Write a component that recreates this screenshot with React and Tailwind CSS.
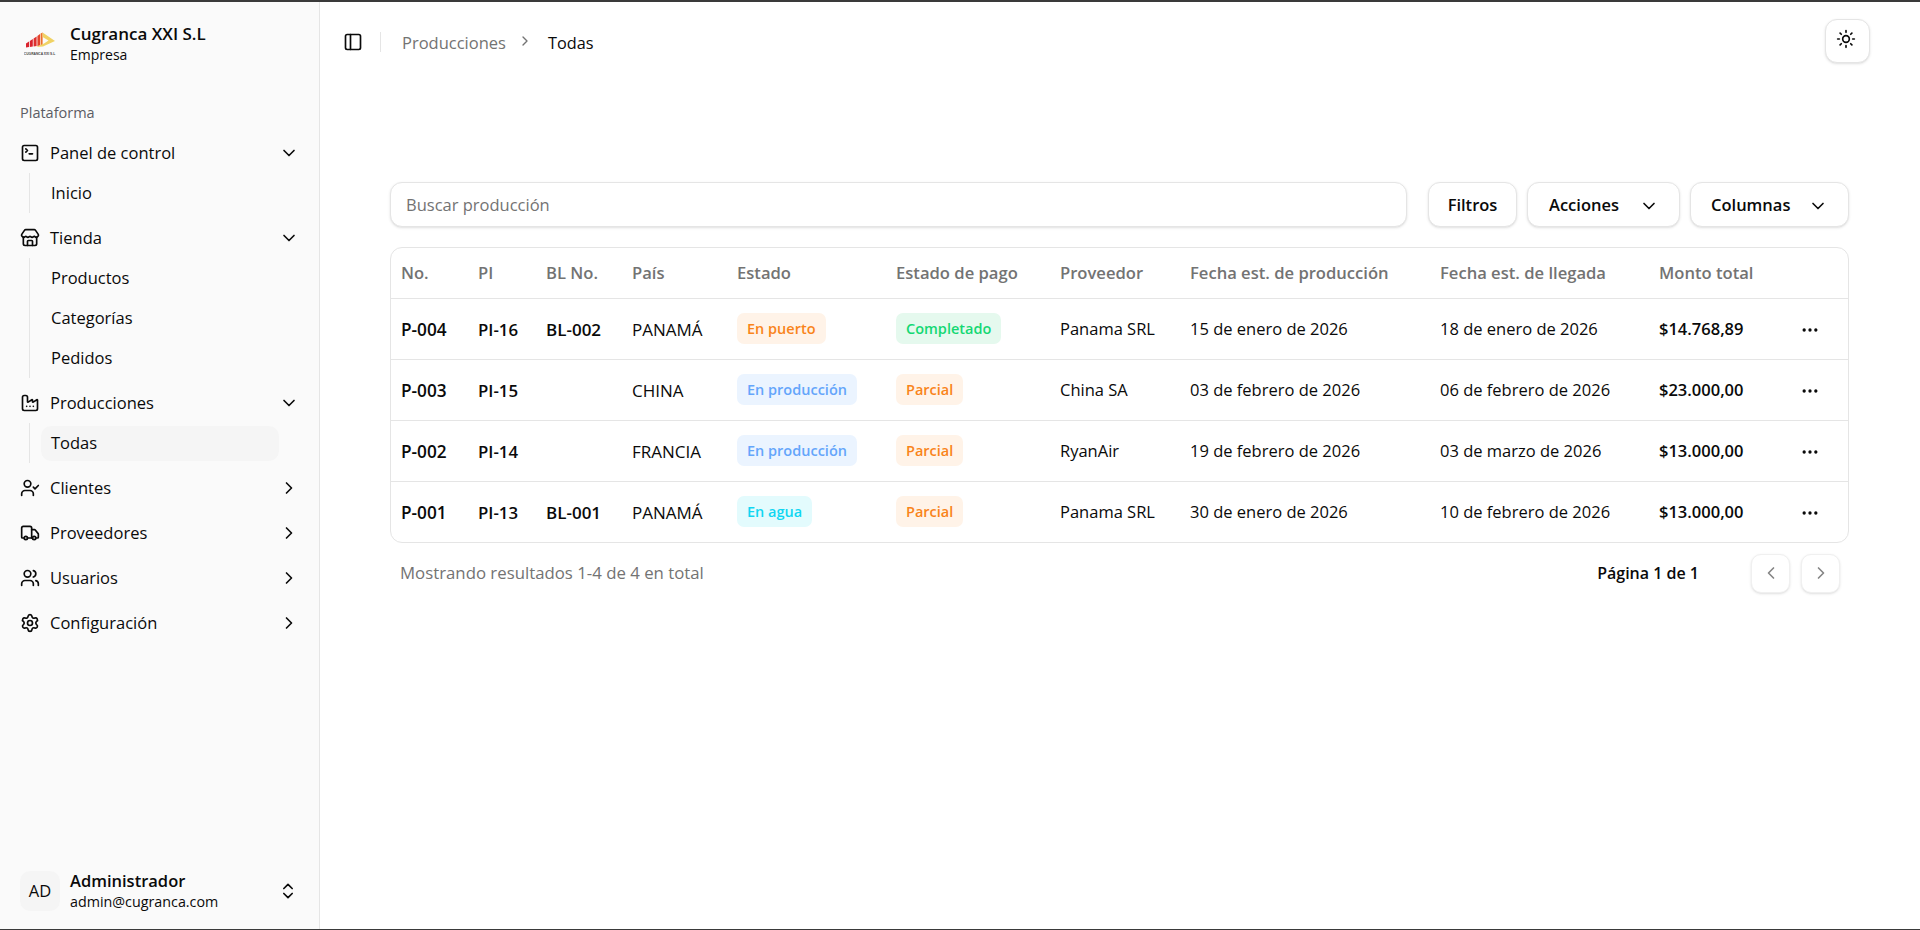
import {
    SquareTerminal,
    Store,
    Factory,
    UserCheck,
    Truck,
    Users,
    Settings,
    ChevronDown,
    ChevronRight,
    ChevronLeft,
    ChevronsUpDown,
    PanelLeft,
    Sun,
    Ellipsis,
} from "lucide-react";

const navItems = [
    { label: "Panel de control", icon: SquareTerminal, open: true, children: ["Inicio"] },
    { label: "Tienda", icon: Store, open: true, children: ["Productos", "Categorías", "Pedidos"] },
    { label: "Producciones", icon: Factory, open: true, children: ["Todas"] },
    { label: "Clientes", icon: UserCheck },
    { label: "Proveedores", icon: Truck },
    { label: "Usuarios", icon: Users },
    { label: "Configuración", icon: Settings },
];

const badgeStyles = {
    puerto: "bg-[#fff3e8] text-[#f9841a]",
    produccion: "bg-[#ebf4ff] text-[#64a5fb]",
    agua: "bg-[#e3fbfd] text-[#0fd6f2]",
    completado: "bg-[#e5f9ee] text-[#14d873]",
    parcial: "bg-[#fff3e8] text-[#f9841a]",
};

const rows = [
    {
        no: "P-004", pi: "PI-16", bl: "BL-002", pais: "PANAMÁ",
        estado: ["En puerto", "puerto"], pago: ["Completado", "completado"],
        proveedor: "Panama SRL", prod: "15 de enero de 2026", llegada: "18 de enero de 2026", monto: "$14.768,89",
    },
    {
        no: "P-003", pi: "PI-15", bl: "", pais: "CHINA",
        estado: ["En producción", "produccion"], pago: ["Parcial", "parcial"],
        proveedor: "China SA", prod: "03 de febrero de 2026", llegada: "06 de febrero de 2026", monto: "$23.000,00",
    },
    {
        no: "P-002", pi: "PI-14", bl: "", pais: "FRANCIA",
        estado: ["En producción", "produccion"], pago: ["Parcial", "parcial"],
        proveedor: "RyanAir", prod: "19 de febrero de 2026", llegada: "03 de marzo de 2026", monto: "$13.000,00",
    },
    {
        no: "P-001", pi: "PI-13", bl: "BL-001", pais: "PANAMÁ",
        estado: ["En agua", "agua"], pago: ["Parcial", "parcial"],
        proveedor: "Panama SRL", prod: "30 de enero de 2026", llegada: "10 de febrero de 2026", monto: "$13.000,00",
    },
];

const headers = [
    "No.", "PI", "BL No.", "País", "Estado", "Estado de pago", "Proveedor",
    "Fecha est. de producción", "Fecha est. de llegada", "Monto total", "",
];

const Logo = () => (
    <svg width="32" height="28" viewBox="0 0 32 28" className="shrink-0">
        <path d="M2 13.5 L5 11.5 L5 17 L2 17.5 Z" fill="#d9232e" />
        <path d="M5.8 11 L8.8 9 L8.8 16.5 L5.8 17 Z" fill="#d9232e" />
        <path d="M9.6 8.5 L12.6 6.5 L12.6 16 L9.6 16.5 Z" fill="#de2f2e" />
        <path d="M13.4 6 L16 4 L16 15.5 L13.4 16 Z" fill="#e4432c" />
        <path d="M16.6 3.5 L18.6 2.5 L18.6 15 L16.6 15.5 Z" fill="#ec6f2b" />
        <path d="M18.6 2.5 L31 11 L19 16.5 L12 17 L20 13.5 L24.5 10.5 L18.6 7 Z" fill="#f0d264" />
        <text x="15.5" y="25" textAnchor="middle" fontSize="3.3" fontWeight="700" fill="#444" fontFamily="Liberation Sans">
            CUGRANCA XXI S.L
        </text>
    </svg>
);

const Sidebar = () => (
    <aside className="w-[320px] shrink-0 bg-[#fafafa] border-r border-[#e5e5e5] flex flex-col text-[#0a0a0a]">
        {/* Company */}
        <div className="h-[81px] flex items-center pl-[24px] pt-[3px] gap-[14px]">
            <Logo />
            <div className="flex flex-col">
                <span className="text-[17px] leading-[22px] font-semibold">Cugranca XXI S.L</span>
                <span className="text-[14px] leading-[20px]">Empresa</span>
            </div>
        </div>

        <div className="px-[10px] pt-[10px]">
            <div className="h-[40px] px-[10px] flex items-center text-[14.5px] font-medium text-[#5c5c64]">Plataforma</div>
            <ul className="flex flex-col gap-[5px]">
                {navItems.map((item) => (
                    <li key={item.label}>
                        <div className="h-[40px] px-[10px] flex items-center gap-[10px] text-[16.5px]">
                            <item.icon size={20} strokeWidth={2} className="shrink-0" />
                            <span className="flex-1 pt-[1px]">{item.label}</span>
                            {item.open ? <ChevronDown size={20} /> : <ChevronRight size={20} />}
                        </div>
                        {item.children && (
                            <ul className="ml-[19px] mr-[30px] border-l border-[#e5e5e5] pl-[11px] pr-[12px] py-[2.5px] flex flex-col gap-[5px]">
                                {item.children.map((child) => (
                                    <li
                                        key={child}
                                        className={`h-[35px] pl-[10px] pt-[1px] -mr-[12px] flex items-center text-[16.5px] rounded-[10px] ${child === "Todas" ? "bg-[#f5f5f5]" : ""}`}
                                    >
                                        {child}
                                    </li>
                                ))}
                            </ul>
                        )}
                    </li>
                ))}
            </ul>
        </div>

        {/* User */}
        <div className="mt-auto h-[76px] pl-[20px] pr-[21px] flex items-center gap-[10px]">
            <div className="w-[40px] h-[40px] rounded-[10px] bg-[#f5f5f5] flex items-center justify-center text-[16.5px]">AD</div>
            <div className="flex-1 flex flex-col">
                <span className="text-[16.5px] leading-[22px] font-semibold">Administrador</span>
                <span className="text-[14.3px] leading-[20px]">admin@cugranca.com</span>
            </div>
            <ChevronsUpDown size={20} />
        </div>
    </aside>
);

const Badge = ({ value }) => (
    <span className={`inline-flex items-center h-[31px] px-[10px] rounded-[7px] text-[14.5px] font-semibold ${badgeStyles[value[1]]}`}>
        {value[0]}
    </span>
);

const ProductionsTable = () => (
    <div className="border border-[#e5e5e5] rounded-[12px] overflow-hidden">
        <table className="w-full table-fixed border-collapse text-[16.5px] text-[#0a0a0a]">
            <colgroup>
                <col className="w-[77px]" />
                <col className="w-[68px]" />
                <col className="w-[86px]" />
                <col className="w-[105px]" />
                <col className="w-[159px]" />
                <col className="w-[164px]" />
                <col className="w-[130px]" />
                <col className="w-[250px]" />
                <col className="w-[219px]" />
                <col className="w-[141px]" />
                <col />
            </colgroup>
            <thead>
                <tr className="h-[50px] border-b border-[#e5e5e5]">
                    {headers.map((h, i) => (
                        <th key={i} className="pl-[10px] pt-[1px] text-left font-semibold text-[16.6px] text-[#737373] whitespace-nowrap">{h}</th>
                    ))}
                </tr>
            </thead>
            <tbody>
                {rows.map((row) => (
                    <tr key={row.no} className="h-[61px] border-b border-[#e5e5e5] last:border-b-0">
                        <td className="pl-[10px] pt-[2px] text-[17.2px] font-semibold">{row.no}</td>
                        <td className="pl-[10px] pt-[2px] text-[16.8px] font-semibold">{row.pi}</td>
                        <td className="pl-[10px] pt-[2px] text-[17px] font-semibold">{row.bl}</td>
                        <td className="pl-[10px] pt-[2px] text-[17px]">{row.pais}</td>
                        <td className="pl-[10px]"><Badge value={row.estado} /></td>
                        <td className="pl-[10px]"><Badge value={row.pago} /></td>
                        <td className="pl-[10px] pt-[2px] whitespace-nowrap">{row.proveedor}</td>
                        <td className="pl-[10px] pt-[2px] whitespace-nowrap">{row.prod}</td>
                        <td className="pl-[10px] pt-[2px] whitespace-nowrap">{row.llegada}</td>
                        <td className="pl-[10px] pt-[2px] font-semibold">{row.monto}</td>
                        <td className="pl-[10px] pt-[2px]"><Ellipsis size={20} /></td>
                    </tr>
                ))}
            </tbody>
        </table>
    </div>
);

const ToolButton = ({ children, className }) => (
    <button className={`h-[45px] rounded-[12px] border border-[#e5e5e5] bg-white shadow-sm flex items-center text-[16.5px] font-semibold text-[#0a0a0a] pt-[2px] ${className}`}>
        {children}
    </button>
);

export default function App() {
    return (
        <div className="h-screen w-screen flex flex-col bg-white overflow-hidden font-['Open_Sans',sans-serif]">
            <div className="h-[2px] shrink-0 bg-[#3a3a3a]" />
            <div className="flex-1 flex min-h-0">
                <Sidebar />
                <main className="flex-1 min-w-0 flex flex-col">
                    {/* Top bar */}
                    <header className="h-[80px] flex items-center pl-[23px] pr-[50px] pb-[2px]">
                        <PanelLeft size={20} className="text-[#0a0a0a] translate-y-[1px]" />
                        <div className="w-px h-[20px] bg-[#e5e5e5] ml-[17px] mr-[21px] translate-y-[1px]" />
                        <span className="text-[16.5px] text-[#737373] translate-y-[2px]">Producciones</span>
                        <ChevronRight size={16} className="text-[#737373] ml-[11px] mr-[15px]" />
                        <span className="text-[16.3px] text-[#0a0a0a] translate-y-[2px]">Todas</span>
                        <button className="ml-auto w-[45px] h-[44px] rounded-[12px] border border-[#e5e5e5] bg-white shadow-sm flex items-center justify-center pb-[4px] pr-[3px]">
                            <Sun size={20} className="text-[#0a0a0a]" />
                        </button>
                    </header>

                    <section className="pl-[70px] pr-[71px] pt-[100px]">
                        {/* Toolbar */}
                        <div className="flex items-center gap-[10px]">
                            <div className="flex-1 mr-[11px] h-[45px] rounded-[12px] border border-[#e5e5e5] bg-white shadow-sm flex items-center pl-[15px] pt-[2px] text-[16.5px] text-[#737373]">
                                Buscar producción
                            </div>
                            <ToolButton className="w-[89px] justify-center">Filtros</ToolButton>
                            <ToolButton className="w-[153px] pl-[21px] pr-[20px] justify-between">
                                Acciones <ChevronDown size={20} />
                            </ToolButton>
                            <ToolButton className="w-[159px] pl-[20px] pr-[20px] justify-between">
                                Columnas <ChevronDown size={20} />
                            </ToolButton>
                        </div>

                        <div className="mt-[20px]">
                            <ProductionsTable />
                        </div>

                        {/* Pagination */}
                        <div className="mt-[10px] h-[40px] flex items-center pl-[10px] pr-[9px]">
                            <span className="text-[16.8px] text-[#737373]">Mostrando resultados 1-4 de 4 en total</span>
                            <span className="ml-auto text-[16px] font-semibold text-[#0a0a0a]">Página 1 de 1</span>
                            <button className="ml-[52px] w-[39px] h-[39px] rounded-[10px] border border-[#f0f0f0] bg-white shadow-sm flex items-center justify-center">
                                <ChevronLeft size={20} className="text-[#858585]" />
                            </button>
                            <button className="ml-[11px] w-[39px] h-[39px] rounded-[10px] border border-[#f0f0f0] bg-white shadow-sm flex items-center justify-center">
                                <ChevronRight size={20} className="text-[#858585]" />
                            </button>
                        </div>
                    </section>
                </main>
            </div>
            <div className="h-[1px] shrink-0 bg-[#3a3a3a]" />
        </div>
    );
}
